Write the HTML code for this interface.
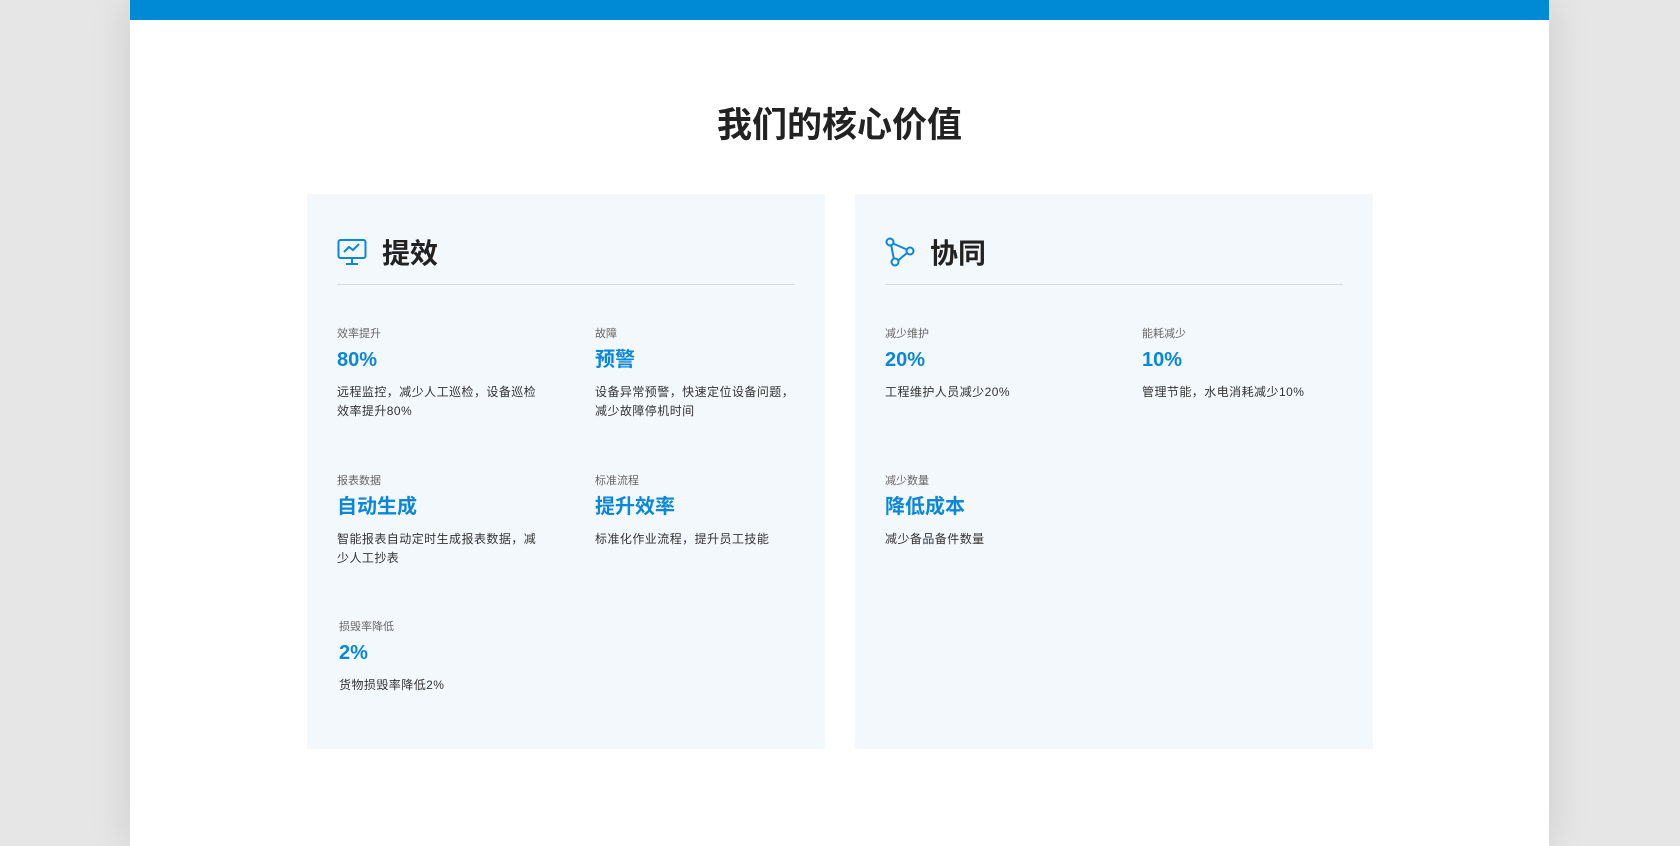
<!DOCTYPE html>
<html><head><meta charset="utf-8"><style>
*{margin:0;padding:0;box-sizing:border-box}
body{width:1680px;height:846px;background:#e6e6e6;font-family:"Liberation Sans","Noto Sans CJK SC",sans-serif;position:relative;overflow:hidden}
.page{position:absolute;left:130px;top:0;width:1419px;height:846px;background:#fff;box-shadow:0 0 40px rgba(0,0,0,.12)}
.bar{position:absolute;left:0;top:0;width:100%;height:20px;background:#008ad6}
h1{position:absolute;left:0;width:100%;top:102px;text-align:center;font-size:35px;font-weight:bold;color:#222;line-height:48px}
.card{position:absolute;top:194px;width:518px;height:555px;background:#f3f8fd}
.hd{position:absolute;left:30px;top:36px;height:44px;display:flex;align-items:center}
.hd svg{width:30px;height:30px;margin-right:15px}
.hd span{font-size:28px;font-weight:bold;color:#222}
.line{position:absolute;left:30px;right:30px;top:90px;height:1px;background:#d8dadc}
.it{position:absolute;width:210px}
.lb{font-size:11px;color:#666;line-height:16px}
.v{font-size:20px;font-weight:bold;color:#0a87d8;line-height:32px;margin-top:2px}
.d{font-size:12px;color:#333;line-height:19px;margin-top:7px;letter-spacing:.45px}
</style></head><body>
<div class="page">
<div class="bar"></div>
<h1>我们的核心价值</h1>
<div class="card" style="left:177px">
 <div class="hd"><svg viewBox="0 0 30 30" fill="none" stroke="#0a87d8" stroke-width="2"><rect x="1.5" y="3" width="27" height="18" rx="2"/><path d="M7 15l5-5 4 3 6-6M15 21v5M9 27h12"/></svg><span>提效</span></div>
 <div class="line"></div>
 <div class="it" style="left:30px;top:132px"><div class="lb">效率提升</div><div class="v">80%</div><div class="d">远程监控，减少人工巡检，设备巡检效率提升80%</div></div>
 <div class="it" style="left:288px;top:132px"><div class="lb">故障</div><div class="v">预警</div><div class="d">设备异常预警，快速定位设备问题，减少故障停机时间</div></div>
 <div class="it" style="left:30px;top:279px"><div class="lb">报表数据</div><div class="v">自动生成</div><div class="d">智能报表自动定时生成报表数据，减少人工抄表</div></div>
 <div class="it" style="left:288px;top:279px"><div class="lb">标准流程</div><div class="v">提升效率</div><div class="d">标准化作业流程，提升员工技能</div></div>
 <div class="it" style="left:32px;top:425px"><div class="lb">损毁率降低</div><div class="v">2%</div><div class="d">货物损毁率降低2%</div></div>
</div>
<div class="card" style="left:725px">
 <div class="hd"><svg viewBox="0 0 30 30" fill="none" stroke="#0a87d8" stroke-width="2"><circle cx="5" cy="5" r="3.5"/><circle cx="25" cy="14" r="3.5"/><circle cx="10" cy="25" r="3.5"/><path d="M8 6.5l13.8 6M22 16l-9 7.5M6.2 8.3l2.6 13.4"/></svg><span>协同</span></div>
 <div class="line"></div>
 <div class="it" style="left:30px;top:132px"><div class="lb">减少维护</div><div class="v">20%</div><div class="d">工程维护人员减少20%</div></div>
 <div class="it" style="left:287px;top:132px"><div class="lb">能耗减少</div><div class="v">10%</div><div class="d">管理节能，水电消耗减少10%</div></div>
 <div class="it" style="left:30px;top:279px"><div class="lb">减少数量</div><div class="v">降低成本</div><div class="d">减少备品备件数量</div></div>
</div>
</div>
</body></html>
